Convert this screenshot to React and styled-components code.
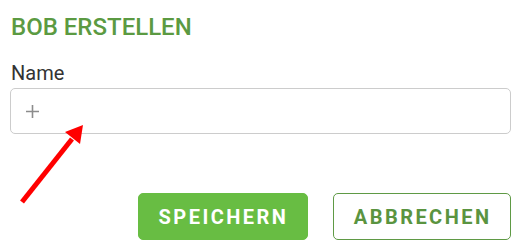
import React from "react";
import styled, { createGlobalStyle } from "styled-components";

const Global = createGlobalStyle`
  html, body { margin: 0; padding: 0; background: #ffffff; }
  body { font-family: Roboto, "Noto Sans", Arial, sans-serif; }
`;

const Page = styled.div`
  position: relative;
  width: 521px;
  height: 250px;
  box-sizing: border-box;
  padding: 13px 10px 0 10px;
  display: flex;
  flex-direction: column;
`;

const Title = styled.h1`
  margin: 0 0 0 1px;
  font-size: 24px;
  line-height: 28px;
  font-weight: 500;
  color: #5b9a42;
`;

const Label = styled.label`
  margin: 19.5px 0 0 1px;
  font-size: 20px;
  line-height: 24px;
  color: #333333;
`;

const InputBox = styled.div`
  margin-top: 3.5px;
  height: 46px;
  box-sizing: border-box;
  border: 1px solid #cccccc;
  border-radius: 5px;
  display: flex;
  align-items: center;
  padding-left: 14px;
`;

const Actions = styled.div`
  margin-top: 59px;
  display: flex;
  justify-content: flex-end;
  gap: 25px;
`;

const Button = styled.button`
  height: 47px;
  box-sizing: border-box;
  padding: 0 ${(p) => (p.$outline ? 18.5 : 18.5)}px 0 ${(p) => (p.$outline ? 20 : 20)}px;
  border-radius: 5px;
  font-family: Roboto, Arial, sans-serif;
  font-size: 20px;
  font-weight: 700;
  letter-spacing: 2.45px;
  cursor: pointer;
  border: 1px solid ${(p) => (p.$outline ? "#5f9a45" : "#68bd43")};
  background: ${(p) => (p.$outline ? "#ffffff" : "#68bd43")};
  color: ${(p) => (p.$outline ? "#5a9440" : "#ffffff")};
`;

const ArrowLayer = styled.svg`
  position: absolute;
  left: 0;
  top: 0;
  pointer-events: none;
`;

function PlusIcon() {
  return (
    <svg width="15" height="15" viewBox="0 0 15 15">
      <path d="M7.5 1v13M1 7.5h13" stroke="#8c8c8c" strokeWidth="1.6" fill="none" />
    </svg>
  );
}

export default function App() {
  return (
    <>
      <Global />
      <Page>
        <Title>BOB ERSTELLEN</Title>
        <Label>Name</Label>
        <InputBox>
          <PlusIcon />
        </InputBox>
        <Actions>
          <Button>SPEICHERN</Button>
          <Button $outline>ABBRECHEN</Button>
        </Actions>
        <ArrowLayer width="521" height="250">
          <line x1="22" y1="202" x2="72" y2="139" stroke="#ff0000" strokeWidth="5" strokeLinecap="butt" />
          <polygon points="83,125 65,132 80,144" fill="#ff0000" />
        </ArrowLayer>
      </Page>
    </>
  );
}
